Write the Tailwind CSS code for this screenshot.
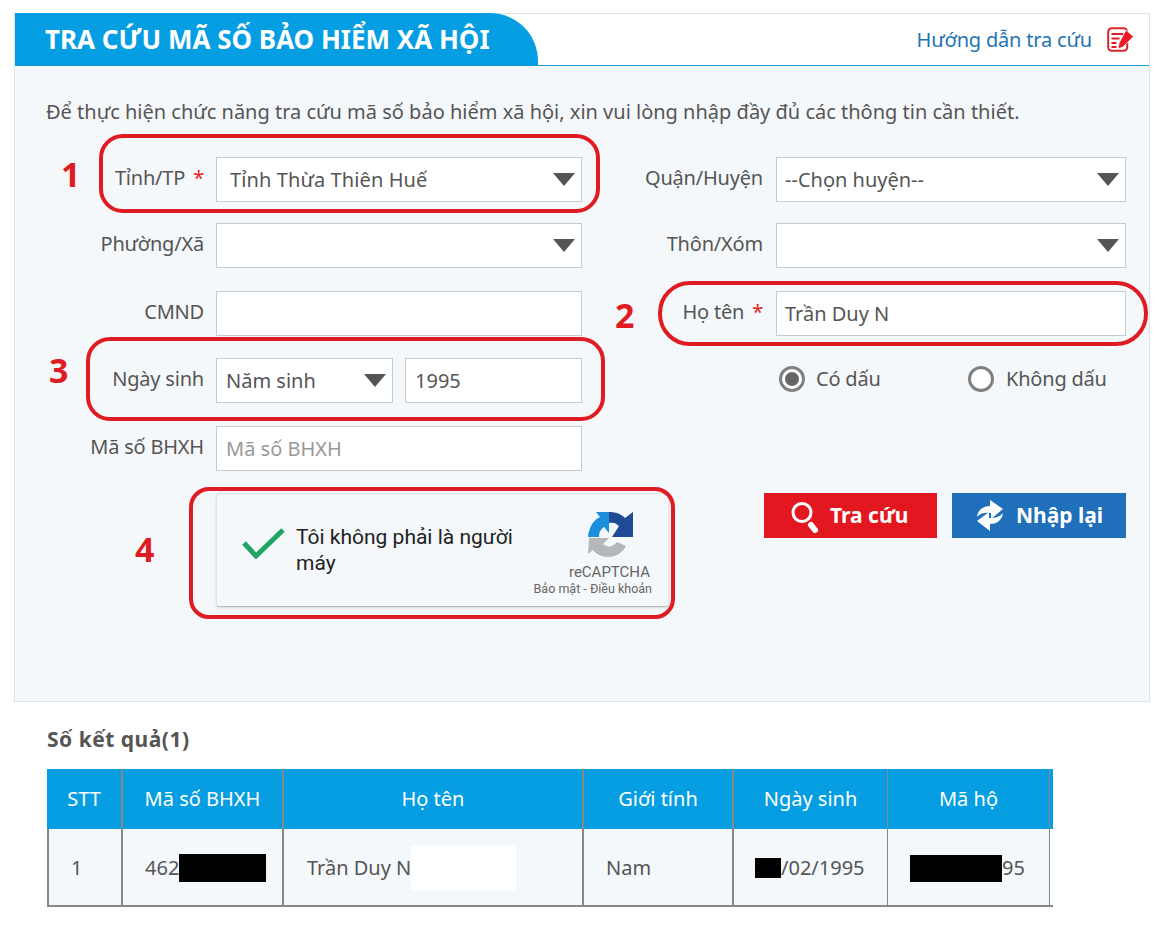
<!DOCTYPE html>
<html lang="vi">
<head>
  <meta charset="UTF-8">
  <title>Tra cứu mã số BHXH</title>
  <script src="https://cdn.jsdelivr.net/npm/@tailwindcss/browser@4"></script>
</head>
<body class="bg-white text-[#555] font-['Noto_Sans',sans-serif] text-[20px]">
  <div class="relative w-[1160px] h-[936px] pt-[13px] pl-[14px] overflow-hidden">
    <!-- Panel -->
    <div class="w-[1136px] h-[689px] border border-[#dfe3e6] bg-[#f5f8fa]">
      <div class="flex justify-between h-[51px] bg-white">
        <div class="w-[523px] h-[52px] -mt-px bg-[#069ee3] rounded-tr-[48px] pl-[30px] flex items-center text-white font-bold text-[26px]">TRA CỨU MÃ SỐ BẢO HIỂM XÃ HỘI</div>
        <div class="flex items-center gap-[15px] pr-[15px] text-[#1f74b4]">
          <span class="tracking-[-0.18px]">Hướng dẫn tra cứu</span>
          <svg class="w-[27px] h-[25px]" viewBox="0 0 27 25"><rect x="1.2" y="1.2" width="19" height="22.5" rx="3.5" fill="none" stroke="#d9262e" stroke-width="2"/><path d="M4.5 7h12M4.5 11.5h8M4.5 16h5M4.5 20h5" stroke="#e21b24" stroke-width="2"/><path d="M19 3l7.5 6.5L16 20l-5 2 1-6z" fill="#ee1c25" stroke="#fff" stroke-width="0.8"/></svg>
        </div>
      </div>
      <div class="h-px bg-[#1a9ad6]"></div>

      <p class="pl-[31px] pt-[32px] leading-[28px] h-[91px]">Để thực hiện chức năng tra cứu mã số bảo hiểm xã hội, xin vui lòng nhập đầy đủ các thông tin cần thiết.</p>

      <div class="flex">
        <!-- Left column -->
        <div class="w-[567px] shrink-0">
          <div class="flex items-center h-[45px]">
            <label class="w-[201px] pr-[12px] pb-[3px] text-right tracking-[-0.2px]">Tỉnh/TP <span class="ml-[3px] text-[#e21b24]">*</span></label>
            <div class="w-[366px] h-[45px] flex items-center justify-between bg-white border border-[#c6cdd2] pl-[13px] pr-[6px]"><span class="tracking-[0.1px]">Tỉnh Thừa Thiên Huế</span><svg class="w-[22px] h-[13px]" viewBox="0 0 22 13"><path d="M0 0h22L11 13z" fill="#555"/></svg></div>
          </div>
          <div class="flex items-center h-[45px] mt-[21px]">
            <label class="w-[201px] pr-[12px] pb-[3px] text-right tracking-[-0.2px]">Phường/Xã</label>
            <div class="w-[366px] h-[45px] flex items-center justify-end bg-white border border-[#c6cdd2] pr-[6px]"><svg class="w-[22px] h-[13px]" viewBox="0 0 22 13"><path d="M0 0h22L11 13z" fill="#555"/></svg></div>
          </div>
          <div class="flex items-center h-[45px] mt-[23px]">
            <label class="w-[201px] pr-[12px] pb-[3px] text-right tracking-[-0.2px]">CMND</label>
            <div class="w-[366px] h-[45px] bg-white border border-[#c6cdd2]"></div>
          </div>
          <div class="flex items-center h-[45px] mt-[22px]">
            <label class="w-[201px] pr-[12px] pb-[3px] text-right tracking-[-0.2px]">Ngày sinh</label>
            <div class="w-[177px] h-[45px] flex items-center justify-between bg-white border border-[#c6cdd2] pl-[9px] pr-[6px]"><span>Năm sinh</span><svg class="w-[22px] h-[13px]" viewBox="0 0 22 13"><path d="M0 0h22L11 13z" fill="#555"/></svg></div>
            <div class="w-[177px] h-[45px] flex items-center ml-[12px] bg-white border border-[#c6cdd2] pl-[9px]">1995</div>
          </div>
          <div class="flex items-center h-[45px] mt-[23px]">
            <label class="w-[201px] pr-[12px] pb-[3px] text-right tracking-[-0.2px]">Mã số BHXH</label>
            <div class="w-[366px] h-[45px] flex items-center bg-white border border-[#c6cdd2] pl-[9px] text-[#999]">Mã số BHXH</div>
          </div>
          <!-- Captcha -->
          <div class="flex justify-between ml-[201px] mt-[22px] w-[453px] h-[114px] border border-[#dfe3e6] border-b-[#bbb] rounded-[3px] shadow-sm bg-[#f5f8fa]">
            <div class="flex items-center">
              <svg class="w-[44px] h-[32px] ml-[25px] mb-[14px] shrink-0" viewBox="0 0 44 32"><path d="M2 16l12 13L41 3" fill="none" stroke="#1fa463" stroke-width="5"/></svg>
              <div class="w-[225px] ml-[10px] mb-[1px] font-['Roboto',sans-serif] text-[#222] leading-[26px] text-[21px]">Tôi không phải là người máy</div>
            </div>
            <div class="flex flex-col items-end shrink-0 pr-[16px] pt-[18px] font-['Roboto',sans-serif]">
              <svg class="w-[45px] h-[45px] mr-[19px]" viewBox="0 0 45 45">
                <path d="M0 25C1 14 6 8 12 5L8 0H21V21L16 15C13 17 11 20 11 25Z" fill="#1c8fdc"/>
                <path d="M21 0C28 0 33 2 37 6L45 0V25H24L31 14C28 11 25 10 21 11Z" fill="#1f4a95"/>
                <path d="M1 26H21L15 32C19 36 25 35 29 30L38 34C34 41 28 45 20 45C13 45 8 42 5 38L0 42Z" fill="#b5b8bb"/>
              </svg>
              <div class="text-[15px] leading-[18px] mt-[6px] mr-[2px] text-[#666]">reCAPTCHA</div>
              <div class="text-[12.5px] leading-[16px] whitespace-nowrap text-[#666]">Bảo mật - Điều khoản</div>
            </div>
          </div>
        </div>

        <!-- Right column -->
        <div class="flex-1">
          <div class="flex items-center h-[45px]">
            <label class="w-[194px] pr-[13px] pb-[3px] text-right tracking-[-0.2px]">Quận/Huyện</label>
            <div class="w-[350px] h-[45px] flex items-center justify-between bg-white border border-[#c6cdd2] pl-[8px] pr-[6px]"><span>--Chọn huyện--</span><svg class="w-[22px] h-[13px]" viewBox="0 0 22 13"><path d="M0 0h22L11 13z" fill="#555"/></svg></div>
          </div>
          <div class="flex items-center h-[45px] mt-[21px]">
            <label class="w-[194px] pr-[13px] pb-[3px] text-right tracking-[-0.2px]">Thôn/Xóm</label>
            <div class="w-[350px] h-[45px] flex items-center justify-end bg-white border border-[#c6cdd2] pr-[6px]"><svg class="w-[22px] h-[13px]" viewBox="0 0 22 13"><path d="M0 0h22L11 13z" fill="#555"/></svg></div>
          </div>
          <div class="flex items-center h-[45px] mt-[23px]">
            <label class="w-[194px] pr-[13px] pb-[3px] text-right tracking-[-0.2px]">Họ tên <span class="ml-[3px] text-[#e21b24]">*</span></label>
            <div class="w-[350px] h-[45px] flex items-center bg-white border border-[#c6cdd2] pl-[8px]">Trần Duy N</div>
          </div>
          <div class="flex items-center h-[26px] mt-[30px] ml-[197px] tracking-[-0.2px]">
            <span class="w-[26px] h-[26px] rounded-full border-[3px] border-[#808080] bg-white flex items-center justify-center"><span class="w-[14px] h-[14px] rounded-full bg-[#666]"></span></span>
            <span class="ml-[11px] w-[152px]">Có dấu</span>
            <span class="w-[26px] h-[26px] rounded-full border-[3px] border-[#808080] bg-white"></span>
            <span class="ml-[12px]">Không dấu</span>
          </div>
          <div class="flex gap-[15px] ml-[182px] mt-[101px]">
            <div class="w-[173px] h-[45px] bg-[#e3171f] text-white font-bold text-[21px] flex items-center pl-[26px]">
              <svg class="w-[28px] h-[36px] shrink-0" viewBox="0 0 28 36"><circle cx="12" cy="14.5" r="9" fill="none" stroke="#fff" stroke-width="3"/><path d="M21 27l4 5" stroke="#fff" stroke-width="6" stroke-linecap="round"/></svg>
              <span class="ml-[12px]">Tra cứu</span>
            </div>
            <div class="w-[174px] h-[45px] bg-[#1f6fba] text-white font-bold text-[21px] flex items-center pl-[25px]">
              <svg class="w-[26px] h-[31px] shrink-0" viewBox="0 0 26 31"><path d="M0 17C1 9 7 6 13 6V0L26 9 14 19V13C8 12 3 13 0 17Z" fill="#fff"/><path d="M26 13C25 21 19 24 13 24V31L0 21 12 12V18C18 18 23 17 26 13Z" fill="#fff"/></svg>
              <span class="ml-[13px]">Nhập lại</span>
            </div>
          </div>
        </div>
      </div>
    </div>

    <!-- Results -->
    <div class="ml-[33px] mt-[23px] w-[1006px]">
      <h3 class="font-bold text-[#555] text-[21px] tracking-[0.5px] leading-[28px]">Số kết quả(1)</h3>
      <div class="mt-[16px] grid grid-cols-[76px_161px_300px_150px_154px_162px_3px] grid-rows-[60px_76px] text-center border-b-2 border-[#888] h-[138px]">
        <div class="bg-[#069ee3] text-white flex items-center justify-center border-r-2 border-[#888]">STT</div>
        <div class="bg-[#069ee3] text-white flex items-center justify-center border-r-2 border-[#888]">Mã số BHXH</div>
        <div class="bg-[#069ee3] text-white flex items-center justify-center border-r-2 border-[#888]">Họ tên</div>
        <div class="bg-[#069ee3] text-white flex items-center justify-center border-r-2 border-[#888]">Giới tính</div>
        <div class="bg-[#069ee3] text-white flex items-center justify-center border-r border-[#888]">Ngày sinh</div>
        <div class="bg-[#069ee3] text-white flex items-center justify-center border-r border-[#888]">Mã hộ</div>
        <div class="bg-[#069ee3]"></div>
        <div class="bg-[#f5f8fa] border-l-2 border-r-2 border-[#888] flex items-center pl-[22px] pt-[2px]">1</div>
        <div class="bg-[#f5f8fa] border-r-2 border-[#888] flex items-center pl-[22px] pt-[2px]">462<span class="w-[87px] h-[28px] bg-black"></span></div>
        <div class="bg-[#f5f8fa] border-r-2 border-[#888] flex items-center pl-[23px] pt-[2px]">Trần Duy N<span class="w-[105px] h-[44px] bg-white"></span></div>
        <div class="bg-[#f5f8fa] border-r-2 border-[#888] flex items-center pl-[22px] pt-[2px]">Nam</div>
        <div class="bg-[#f5f8fa] border-r border-[#888] flex items-center pl-[21px] pt-[2px]"><span class="w-[26px] h-[20px] bg-black"></span>/02/1995</div>
        <div class="bg-[#f5f8fa] border-r border-[#888] flex items-center pl-[22px] pt-[2px]"><span class="w-[92px] h-[27px] bg-black"></span>95</div>
        <div></div>
      </div>
    </div>

    <!-- Annotations drawn over the form -->
    <div class="absolute left-[99px] top-[134px] w-[501px] h-[79px] border-[4px] border-[#df1c24] rounded-[24px]"></div>
    <div class="absolute left-[658px] top-[281px] w-[490px] h-[65px] border-[4px] border-[#df1c24] rounded-[32px]"></div>
    <div class="absolute left-[86px] top-[337px] w-[519px] h-[84px] border-[4px] border-[#df1c24] rounded-[24px]"></div>
    <div class="absolute left-[189px] top-[487px] w-[486px] h-[132px] border-[4px] border-[#df1c24] rounded-[20px]"></div>
    <span class="absolute left-[61px] top-[151px] text-[34px] leading-[46px] font-bold text-[#df1c24]">1</span>
    <span class="absolute left-[615px] top-[292px] text-[34px] leading-[46px] font-bold text-[#df1c24]">2</span>
    <span class="absolute left-[49px] top-[347px] text-[34px] leading-[46px] font-bold text-[#df1c24]">3</span>
    <span class="absolute left-[135px] top-[526px] text-[34px] leading-[46px] font-bold text-[#df1c24]">4</span>
  </div>
</body>
</html>
